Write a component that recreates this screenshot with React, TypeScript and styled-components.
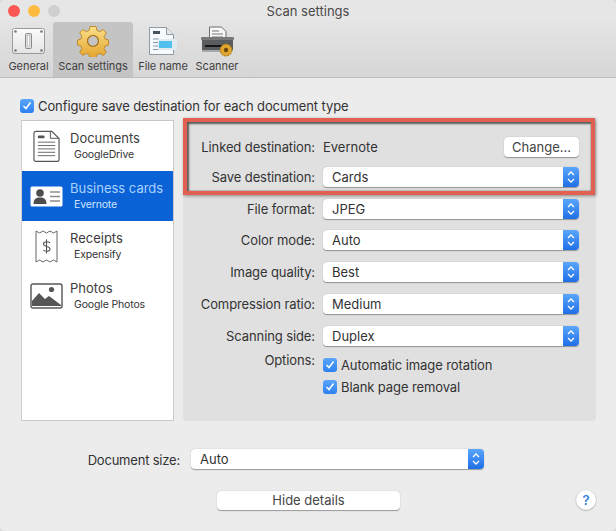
import React from "react";
import styled, { createGlobalStyle } from "styled-components";

const GlobalStyle = createGlobalStyle`
  html, body { margin: 0; padding: 0; background: #dcdcdc; }
  * { box-sizing: border-box; }
`;

const GeneralIcon = () => (
  <svg width="33" height="26" viewBox="0 0 33 26">
    <defs>
      <linearGradient id="plate" x1="0" y1="0" x2="0" y2="1">
        <stop offset="0" stopColor="#fbfbfb" />
        <stop offset="1" stopColor="#e4e4e4" />
      </linearGradient>
    </defs>
    <rect x="0.5" y="0.5" width="32" height="25" rx="2" fill="url(#plate)" stroke="#9a9a9a" />
    <circle cx="3.5" cy="3.5" r="1.3" fill="#777" />
    <circle cx="29.5" cy="3.5" r="1.3" fill="#777" />
    <circle cx="3.5" cy="22.5" r="1.3" fill="#777" />
    <circle cx="29.5" cy="22.5" r="1.3" fill="#777" />
    <rect x="13.5" y="5.5" width="6" height="15" rx="1" fill="#d9d9d9" stroke="#8b8b8b" />
    <rect x="15.5" y="7.5" width="2" height="10" fill="#fff" stroke="#aaa" strokeWidth="0.5" />
  </svg>
);

const GearIcon = () => (
  <svg width="32" height="32" viewBox="0 0 32 32">
    <defs>
      <linearGradient id="gold" x1="0" y1="0" x2="0" y2="1">
        <stop offset="0" stopColor="#fae08a" />
        <stop offset="1" stopColor="#e3a42c" />
      </linearGradient>
    </defs>
    <path
      fillRule="evenodd"
      fill="url(#gold)"
      stroke="#c08a2a"
      strokeWidth="1"
      strokeLinejoin="round"
      d="M13 1.500h6l1 4 2.700 1.100 3.600-2 3 3.400-2.200 3.300.9 2.700 3.500 1v5l-3.500 1-.9 2.700 2.200 3.300-3 3.400-3.600-2-2.700 1.100-1 3.500h-6l-1-3.500-2.700-1.100-3.600 2-3-3.400 2.200-3.300-.9-2.700-3.500-1v-5l3.500-1 .9-2.700-2.200-3.300 3-3.400 3.600 2L12 5.500zM16 10.500a5.500 5.500 0 1 0 0 11 5.500 5.500 0 0 0 0-11z"
    />
    <circle cx="16" cy="16" r="5.500" fill="none" stroke="#a8741e" strokeWidth="1.200" />
  </svg>
);

const FileNameIcon = () => (
  <svg width="30" height="30" viewBox="0 0 30 30">
    <path d="M1.500 1.500h17l7 7v20h-24z" fill="#f8fbfd" stroke="#8f9aa3" />
    <path d="M18.500 1.500v7h7" fill="#e3e8ec" stroke="#8f9aa3" />
    <rect x="5" y="5" width="7" height="3" fill="#48525c" />
    <path d="M5 13h6M5 16.500h6M5 20h6M5 23.500h15" stroke="#7f98ab" strokeWidth="1.200" />
    <rect x="10" y="13" width="19" height="11" fill="#dfe9ef" />
    <rect x="11" y="15" width="13" height="7" fill="#52c0ee" />
  </svg>
);

const ScannerIcon = () => (
  <svg width="33" height="31" viewBox="0 0 33 31">
    <path d="M8.500 1h12l4.500 4.500V13h-16.500z" fill="#f7f7f7" stroke="#6e6e6e" />
    <path d="M11 5h7M11 8h11M11 11h11" stroke="#777" />
    <path d="M1 13h31v11H1z" fill="#5a5d60" />
    <rect x="0" y="11" width="33" height="3" rx="1" fill="#77797b" />
    <rect x="4" y="19" width="18" height="2" fill="#161616" />
    <rect x="1" y="24" width="24" height="2" fill="#a5a7a9" />
    <circle cx="25" cy="24" r="6" fill="#e0a52d" stroke="#a0701a" strokeDasharray="2 1" />
    <circle cx="25" cy="24" r="2.200" fill="#6b4a12" />
  </svg>
);

const DocumentIcon = () => (
  <svg width="27" height="33" viewBox="0 0 28 33">
    <path d="M3 .75h16.500l7.500 7.500V30a2 2 0 0 1-2 2H3a2 2 0 0 1-2-2V2.750a2 2 0 0 1 2-2z" fill="#fff" stroke="#555" strokeWidth="1.200" />
    <path d="M18 1v7h8" fill="none" stroke="#555" />
    <rect x="5" y="5" width="7" height="3" rx="1" fill="#555" />
    <path d="M5 12h18M5 15.500h18M5 19h18M5 22.500h18M5 26h18" stroke="#666" />
  </svg>
);

const CardIcon = () => (
  <svg width="33" height="21" viewBox="0 0 33 21">
    <rect x="0.500" y="0.500" width="32" height="20" rx="1.500" fill="#fff" />
    <circle cx="10" cy="7" r="3.800" fill="#4d4d4d" />
    <path d="M3.500 18c0-5 2.500-6.500 6.500-6.500s6.500 1.500 6.500 6.500z" fill="#4d4d4d" />
    <path d="M20 6h10M20 10.500h10M20 15h10" stroke="#8d8d8d" strokeWidth="1.400" />
  </svg>
);

const ReceiptIcon = () => (
  <svg width="23" height="35" viewBox="0 0 23 35">
    <path
      d="M1 2l3.500 2 3.500-2 3.500 2 3.500-2 3.500 2 3.500-2v31l-3.500-2-3.500 2-3.500-2-3.500 2-3.500-2-3.500 2z"
      fill="#fff"
      stroke="#666"
    />
    <path d="M15 14c-1-1.500-6.500-2-6.500 1 0 3.500 6.500 1.500 6.500 5 0 3-5.500 2.500-6.800 1M11.500 10.500v14" fill="none" stroke="#555" strokeWidth="1.100" />
  </svg>
);

const PhotoIcon = () => (
  <svg width="33" height="26" viewBox="0 0 33 26">
    <rect x="1" y="1" width="31" height="24" rx="2" fill="#fff" stroke="#555" strokeWidth="1.400" />
    <circle cx="21.500" cy="6.500" r="2.600" fill="#555" />
    <path d="M2 23v-5l7-8 6 6 4-3 12 9v1z" fill="#555" />
  </svg>
);

const Check = () => (
  <svg width="10" height="9" viewBox="0 0 10 9">
    <path d="M1.500 5l2.500 2.500L8.500 1.500" fill="none" stroke="#fff" strokeWidth="1.500" />
  </svg>
);

const Chevrons = () => (
  <svg width="8" height="14" viewBox="0 0 8 14">
    <path d="M1 5l3-3 3 3M1 9l3 3 3-3" fill="none" stroke="#fff" strokeWidth="1.300" />
  </svg>
);

const tabs = [
  { label: "General", icon: <GeneralIcon />, width: 43 },
  { label: "Scan settings", icon: <GearIcon />, width: 80, active: true },
  { label: "File name", icon: <FileNameIcon />, width: 54 },
  { label: "Scanner", icon: <ScannerIcon />, width: 48 },
];

const docTypes = [
  { name: "Documents", service: "GoogleDrive", icon: <DocumentIcon /> },
  { name: "Business cards", service: "Evernote", icon: <CardIcon />, selected: true },
  { name: "Receipts", service: "Expensify", icon: <ReceiptIcon /> },
  { name: "Photos", service: "Google Photos", icon: <PhotoIcon /> },
];

const settings = [
  { label: "File format:", value: "JPEG" },
  { label: "Color mode:", value: "Auto" },
  { label: "Image quality:", value: "Best" },
  { label: "Compression ratio:", value: "Medium" },
  { label: "Scanning side:", value: "Duplex" },
];

const SelectBox: React.FC<{ value: string; width?: number }> = ({ value, width }) => (
  <Select $width={width}>
    <SelectValue>{value}</SelectValue>
    <SelectArrow>
      <Chevrons />
    </SelectArrow>
  </Select>
);

const App: React.FC = () => {
  return (
    <Window>
      <GlobalStyle />
      <TitleBar>
        <Lights>
          <Light $color="#fc5753" />
          <Light $color="#fdbc40" />
          <Light $color="#cfcfcf" />
        </Lights>
        <Title>Scan settings</Title>
      </TitleBar>
      <Toolbar>
        {tabs.map((tab) => (
          <Tab key={tab.label} $active={tab.active} $width={tab.width}>
            <TabIcon>{tab.icon}</TabIcon>
            <TabLabel>{tab.label}</TabLabel>
          </Tab>
        ))}
      </Toolbar>
      <Body>
        <ConfigureRow>
          <CheckBox>
            <Check />
          </CheckBox>
          <span>Configure save destination for each document type</span>
        </ConfigureRow>
        <Columns>
          <DocList>
            {docTypes.map((doc) => (
              <DocRow key={doc.name} $selected={doc.selected}>
                <DocIcon>{doc.icon}</DocIcon>
                <DocText>
                  <DocName $selected={doc.selected}>{doc.name}</DocName>
                  <DocService>{doc.service}</DocService>
                </DocText>
              </DocRow>
            ))}
          </DocList>
          <Panel>
            <Highlight />
            <LinkedRow>
              <FieldLabel>Linked destination:</FieldLabel>
              <LinkedValue>Evernote</LinkedValue>
              <ChangeButton>Change...</ChangeButton>
            </LinkedRow>
            <FieldRow>
              <FieldLabel>Save destination:</FieldLabel>
              <SelectBox value="Cards" />
            </FieldRow>
            {settings.map((item) => (
              <FieldRow key={item.label}>
                <FieldLabel>{item.label}</FieldLabel>
                <SelectBox value={item.value} />
              </FieldRow>
            ))}
            <OptionsRow>
              <FieldLabel>Options:</FieldLabel>
              <OptionList>
                <OptionItem>
                  <CheckBox>
                    <Check />
                  </CheckBox>
                  <span>Automatic image rotation</span>
                </OptionItem>
                <OptionItem>
                  <CheckBox>
                    <Check />
                  </CheckBox>
                  <span>Blank page removal</span>
                </OptionItem>
              </OptionList>
            </OptionsRow>
          </Panel>
        </Columns>
        <SizeRow>
          <SizeLabel>Document size:</SizeLabel>
          <SelectBox value="Auto" width={293} />
        </SizeRow>
        <FooterRow>
          <HideButton>Hide details</HideButton>
          <HelpButton>?</HelpButton>
        </FooterRow>
      </Body>
    </Window>
  );
};

export default App;

const font = `"Inter", "Liberation Sans", sans-serif`;

const Window = styled.div`
  width: 616px;
  height: 531px;
  background: #ececec;
  border-radius: 6px 6px 5px 5px;
  overflow: hidden;
  font-family: ${font};
  color: #333;
  display: flex;
  flex-direction: column;
`;
const TitleBar = styled.div`
  height: 22px;
  display: flex;
  align-items: center;
  justify-content: center;
  position: relative;
  background: #e6e6e6;
`;
const Lights = styled.div`
  position: absolute;
  left: 8px;
  top: 5px;
  display: flex;
  gap: 8px;
`;
const Light = styled.div<{ $color: string }>`
  width: 12px;
  height: 12px;
  border-radius: 50%;
  background: ${(p) => p.$color};
`;
const Title = styled.div`
  font-size: 13px;
  color: #4a4a4a;
`;
const Toolbar = styled.div`
  height: 56px;
  padding-left: 7px;
  display: flex;
  gap: 3px;
  background: linear-gradient(#e4e4e4, #d6d6d6);
  border-bottom: 1px solid #bdbdbd;
`;
const Tab = styled.div<{ $active?: boolean; $width: number }>`
  width: ${(p) => p.$width}px;
  height: 55px;
  display: flex;
  flex-direction: column;
  align-items: center;
  justify-content: flex-end;
  padding-bottom: 4px;
  background: ${(p) => (p.$active ? "#c4c4c4" : "transparent")};
  border-radius: 3px 3px 0 0;
`;
const TabIcon = styled.div`
  height: 34px;
  margin-bottom: 1px;
  display: flex;
  align-items: center;
  justify-content: center;
`;
const TabLabel = styled.div`
  font-size: 11px;
  line-height: 14px;
  letter-spacing: -0.05px;
  color: #3f3f3f;
  white-space: nowrap;
`;
const Body = styled.div`
  flex: 1;
  padding: 19px 20px 0 21px;
  display: flex;
  flex-direction: column;
`;
const ConfigureRow = styled.div`
  display: flex;
  align-items: center;
  gap: 4px;
  margin-left: -1px;
  height: 17px;
  font-size: 13px;
  letter-spacing: -0.1px;
  color: #333;
`;
const CheckBox = styled.div`
  width: 14px;
  height: 14px;
  border-radius: 3px;
  background: linear-gradient(#5aa6fb, #2d80f0);
  display: flex;
  align-items: center;
  justify-content: center;
  flex-shrink: 0;
`;
const Columns = styled.div`
  display: flex;
  gap: 9px;
  margin-top: 6px;
  height: 301px;
`;
const DocList = styled.div`
  width: 153px;
  background: #fff;
  border: 1px solid #c8c8c8;
  border-left-color: #d0d0d0;
`;
const DocRow = styled.div<{ $selected?: boolean }>`
  height: 50px;
  display: flex;
  background: ${(p) => (p.$selected ? "#0a62d6" : "transparent")};
  color: ${(p) => (p.$selected ? "#cfe5ff" : "#333")};
`;
const DocIcon = styled.div`
  width: 48px;
  display: flex;
  align-items: center;
  justify-content: center;
`;
const DocText = styled.div`
  padding-top: 9px;
`;
const DocName = styled.div<{ $selected?: boolean }>`
  font-size: 13px;
  line-height: 17px;
  color: ${(p) => (p.$selected ? "#a9d2ff" : "#3c3c3c")};
`;
const DocService = styled.div`
  font-size: 10.500px;
  line-height: 15px;
  letter-spacing: -0.15px;
  margin-left: 4px;
`;
const Panel = styled.div`
  flex: 1;
  position: relative;
  background: #e0e0e0;
  border-radius: 4px;
  padding-top: 13px;
  padding-right: 17px;
  display: flex;
  flex-direction: column;
`;
const Highlight = styled.div`
  position: absolute;
  left: 0;
  top: -2px;
  width: 412px;
  height: 77px;
  border: 4px solid #e2604f;
  box-shadow: inset 1px 1px 2px 1px #5a5a5a, 1px 1px 3px rgba(0, 0, 0, 0.4);
  pointer-events: none;
`;
const FieldRow = styled.div`
  height: 31.800px;
  display: flex;
  align-items: center;
  flex-shrink: 0;
`;
const LinkedRow = styled(FieldRow)`
  height: 28px;
`;
const FieldLabel = styled.div`
  width: 132px;
  margin-right: 8px;
  text-align: right;
  font-size: 13px;
  letter-spacing: -0.1px;
  white-space: nowrap;
  color: #333;
`;
const LinkedValue = styled.div`
  flex: 1;
  font-size: 13px;
  color: #333;
`;
const ChangeButton = styled.div`
  width: 75px;
  height: 20px;
  background: #fff;
  border-radius: 4px;
  box-shadow: 0 0.500px 1px rgba(0, 0, 0, 0.35);
  display: flex;
  align-items: center;
  justify-content: center;
  font-size: 13px;
  color: #444;
`;
const Select = styled.div<{ $width?: number }>`
  ${(p) => (p.$width ? `width: ${p.$width}px;` : "flex: 1;")}
  height: 20px;
  background: #fff;
  border-radius: 4px;
  box-shadow: 0 0.500px 1px rgba(0, 0, 0, 0.35);
  display: flex;
  align-items: center;
  overflow: hidden;
`;
const SelectValue = styled.div`
  flex: 1;
  padding-left: 9px;
  font-size: 13px;
  color: #333;
`;
const SelectArrow = styled.div`
  width: 16px;
  height: 20px;
  background: linear-gradient(#5aa6fb, #1f6fe6);
  display: flex;
  align-items: center;
  justify-content: center;
`;
const OptionsRow = styled.div`
  display: flex;
  align-items: flex-start;
`;
const OptionList = styled.div`
  display: flex;
  flex-direction: column;
  gap: 6px;
  padding-top: 5px;
`;
const OptionItem = styled.div`
  display: flex;
  align-items: center;
  gap: 4px;
  height: 16px;
  font-size: 13px;
  letter-spacing: -0.1px;
  color: #333;
`;
const SizeRow = styled.div`
  display: flex;
  align-items: center;
  margin-top: 28px;
`;
const SizeLabel = styled.div`
  width: 159px;
  margin-right: 11px;
  text-align: right;
  font-size: 13px;
  letter-spacing: -0.2px;
  color: #333;
  padding-top: 1px;
`;
const FooterRow = styled.div`
  display: flex;
  align-items: center;
  justify-content: space-between;
  margin-top: 21px;
  padding-left: 196px;
`;
const HideButton = styled.div`
  width: 183px;
  height: 19px;
  background: #fff;
  border-radius: 4px;
  box-shadow: 0 0.500px 1px rgba(0, 0, 0, 0.35);
  display: flex;
  align-items: center;
  justify-content: center;
  font-size: 13px;
  color: #444;
`;
const HelpButton = styled.div`
  width: 20px;
  height: 20px;
  border-radius: 50%;
  background: #fff;
  box-shadow: 0 0.500px 1.500px rgba(0, 0, 0, 0.4);
  display: flex;
  align-items: center;
  justify-content: center;
  font-size: 13px;
  font-weight: 600;
  color: #2f7fd8;
`;
